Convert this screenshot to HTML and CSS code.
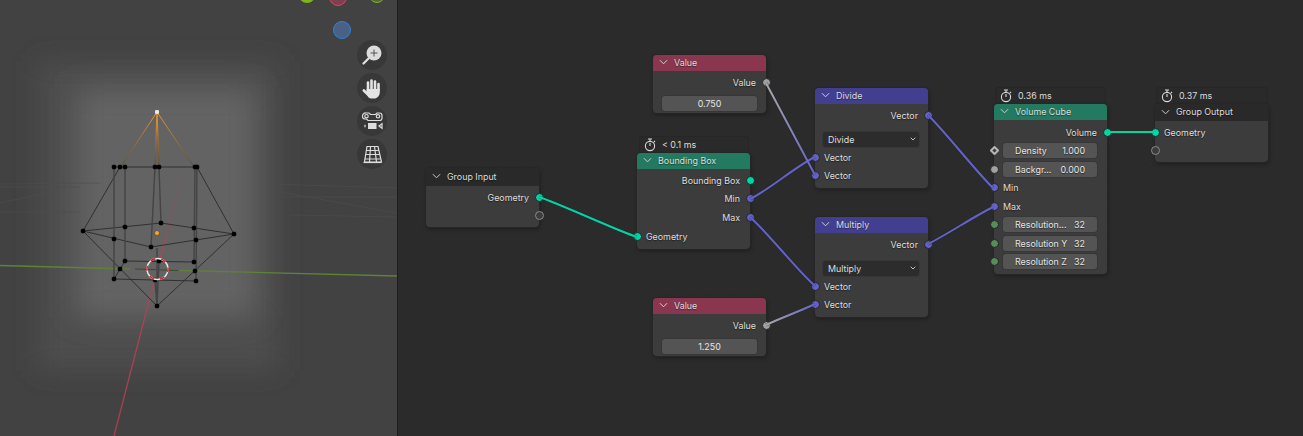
FILE: index.html
```html
<!DOCTYPE html>
<html lang="en">
<head>
<meta charset="utf-8">
<title>Geometry Nodes</title>
<link rel="stylesheet" href="styles.css">
</head>
<body>
<svg class="defs" width="0" height="0" aria-hidden="true">
  <defs>
    <symbol id="chev" viewBox="0 0 10 6"><path d="M1 1l4 4 4-4" fill="none" stroke="currentColor" stroke-width="1.100"/></symbol>
    <symbol id="watch" viewBox="0 0 12 14"><g fill="none" stroke="#d8d8d8" stroke-width="1.100"><circle cx="6" cy="8" r="4.600"/><path d="M6 8V5M4 1h4M6 1v2M10 3l1 1"/></g></symbol>
    <symbol id="small-chev" viewBox="0 0 6 4"><path d="M.7.7L3 3 5.300.7" fill="none" stroke="#d0d0d0" stroke-width=".9"/></symbol>
  </defs>
</svg>
<main class="app">
  <section class="viewport">
    <svg class="scene" viewBox="0 0 397 436" width="397" height="436">
      <defs>
        <filter id="blur-a" x="-40%" y="-40%" width="180%" height="180%"><feGaussianBlur stdDeviation="12"/></filter>
        <filter id="blur-b" x="-40%" y="-40%" width="180%" height="180%"><feGaussianBlur stdDeviation="14"/></filter>
        <linearGradient id="fade-orange-l" gradientUnits="userSpaceOnUse" x1="157" y1="112" x2="157" y2="167"><stop offset="0" stop-color="#f39a2e"/><stop offset="1" stop-color="#5a4a38"/></linearGradient>
        <linearGradient id="fade-red" gradientUnits="userSpaceOnUse" x1="114" y1="436" x2="183" y2="170"><stop offset="0" stop-color="#a93d50"/><stop offset=".7" stop-color="#a5485a"/><stop offset="1" stop-color="#6a5a5d" stop-opacity=".2"/></linearGradient>
      </defs>
      <rect x="38" y="62" width="240" height="308" fill="#4d4d4d" filter="url(#blur-a)"/>
      <rect x="76" y="88" width="180" height="230" fill="#636363" filter="url(#blur-b)"/>
      <g stroke="#4f4f4f" stroke-width="1" fill="none" opacity=".6">
        <path d="M0 184L100 183M0 187H80M0 203L60 190M0 212H80M270 184L397 188M280 192L397 213M270 197H397M290 215L397 217"/>
      </g>
      <path d="M0 265.500L130 269M180 270.500L397 276" stroke="#5f8236" stroke-width="1.300" fill="none"/>
      <path d="M135 269L178 270.500" stroke="#3d4a2a" stroke-width="1.200" fill="none"/>
      <path d="M114 436L183 170" stroke="url(#fade-red)" stroke-width="1.300" fill="none"/>
      <g stroke="url(#fade-orange-l)" fill="none">
        <path d="M157 112L122 165" stroke-width="1"/>
        <path d="M157 112L155 167M157 112L159 167" stroke-width="1.200"/>
        <path d="M157 112L194 167" stroke-width="1"/>
      </g>
      <g fill="none" stroke="#2a2a2a" stroke-width=".9">
        <path d="M114 167H197"/>
        <path d="M120 167L83 231M197 167L234 234"/>
        <path d="M83 231L161 223L234 234L151 247Z"/>
        <path d="M83 231L157 306L234 234"/>
        <path d="M125 261L194 262M114 279L196 281M125 261L114 279"/>
      </g>
      <g fill="none" stroke="#444" stroke-width="1.400">
        <path d="M114 167V279M125 167V261M195 167L194 262M197 167L196 281"/>
        <path d="M155 167L151 247M159 167L161 223M157 248V306M155 280L157 306M159 261L157 306"/>
      </g>
      <g class="verts" fill="#000">
        <rect x="112" y="165" width="4" height="4"/><rect x="118" y="165" width="4" height="4"/><rect x="123" y="165" width="4" height="4"/><rect x="153" y="165" width="4" height="4"/><rect x="157" y="165" width="4" height="4"/><rect x="193" y="165" width="4" height="4"/><rect x="195" y="165" width="4" height="4"/>
        <rect x="81" y="229" width="4" height="4"/><rect x="123" y="225" width="4" height="4"/><rect x="159" y="221" width="4" height="4"/><rect x="192" y="226" width="4" height="4"/><rect x="232" y="232" width="4" height="4"/><rect x="194" y="238" width="4" height="4"/><rect x="149" y="245" width="4" height="4"/><rect x="112" y="237" width="4" height="4"/>
        <rect x="123" y="259" width="4" height="4"/><rect x="157" y="259" width="4" height="4"/><rect x="192" y="260" width="4" height="4"/><rect x="118" y="267" width="4" height="4"/><rect x="193" y="269" width="4" height="4"/><rect x="112" y="277" width="4" height="4"/><rect x="153" y="278" width="4" height="4"/><rect x="194" y="279" width="4" height="4"/><rect x="155" y="304" width="4" height="4"/>
      </g>
      <rect class="apex" x="155" y="110" width="4" height="4" fill="#e8e8e8"/>
      <circle cx="157" cy="233" r="2.500" fill="#f2a531" stroke="#3a3a3a" stroke-width=".6"/>
      <circle cx="157.500" cy="269" r="10.500" fill="none" stroke="#e8e8e8" stroke-width="1.400"/>
      <circle cx="157.500" cy="269" r="10.500" fill="none" stroke="#e0181c" stroke-width="1.400" stroke-dasharray="5 6" stroke-dashoffset="2"/>
    </svg>
    <div class="gizmo">
      <span class="axis axis-y"></span>
      <span class="axis axis-x"></span>
      <span class="axis axis-y2"></span>
      <span class="axis axis-z"></span>
    </div>
    <div class="tools">
      <div class="tool">
        <svg viewBox="0 0 30 30" width="30" height="30"><circle cx="17" cy="13" r="7.500" fill="#dcdcdc"/><path d="M11.500 18.500L6.500 23.500" stroke="#dcdcdc" stroke-width="2.400" stroke-linecap="round"/><path d="M17 9.500v7M13.500 13h7" stroke="#555" stroke-width="1"/></svg>
      </div>
      <div class="tool">
        <svg viewBox="0 0 30 30" width="30" height="30"><g stroke="#e4e4e4" stroke-width="2.600" stroke-linecap="round" fill="none"><path d="M11 17V9.500M14.500 16V7.500M18 16V8.500M21.500 17V11M6.800 17.500L11 21.500"/></g><path d="M9.500 16H22.800V19C22.800 23 20 25.500 17 25.500H14C11.500 25.500 10 22.500 9.500 20z" fill="#e4e4e4"/></svg>
      </div>
      <div class="tool">
        <svg viewBox="0 0 30 30" width="30" height="30"><g fill="none" stroke="#dcdcdc" stroke-width="1.200"><path d="M9 7h3l1.500 1.500h5L20 7h2.500a2.500 2.500 0 0 1 2.500 2.500V12a2.500 2.500 0 0 1-2.500 2.500H11l-1.500-1.500H8A2.500 2.500 0 0 1 5.500 10.500V10A3 3 0 0 1 9 7z"/><circle cx="9.500" cy="10.200" r="1.700"/><circle cx="21" cy="10.300" r="1.700"/><rect x="11" y="17" width="8.500" height="6" fill="#dcdcdc" stroke="none"/><path d="M8 18.800v2.400M25 17.800l-3 2.200 3 2.200z"/></g></svg>
      </div>
      <div class="tool">
        <svg viewBox="0 0 30 30" width="30" height="30"><g fill="none" stroke="#dcdcdc" stroke-width="1.200"><path d="M10 7.500h11l3.500 15.500h-17z"/><path d="M9.200 11.500h12.700M8.400 15.500h14.300M7.500 20h16M13.500 7.500L12.500 23M17.500 7.500L19.500 23"/><path d="M6.500 23.500h18"/></g></svg>
      </div>
    </div>
  </section>
  <section class="editor">
    <svg class="wires" viewBox="0 0 905 436" width="905" height="436">
      <defs>
        <linearGradient id="w-grey-a" gradientUnits="userSpaceOnUse" x1="368" y1="83" x2="417" y2="175"><stop offset="0" stop-color="#a8a8a8"/><stop offset="1" stop-color="#6363c7"/></linearGradient>
        <linearGradient id="w-grey-b" gradientUnits="userSpaceOnUse" x1="368" y1="325" x2="417" y2="304"><stop offset="0" stop-color="#a8a8a8"/><stop offset="1" stop-color="#6363c7"/></linearGradient>
      </defs>
      <g fill="none" stroke="#1f1f1f" stroke-width="3.400" opacity=".45">
        <path d="M141 197C160 203 220 231 239 237"/>
        <path d="M352 199C371 190 398 166 417 157"/>
        <path d="M352 217C371 234 398 269 417 286"/>
        <path d="M368 83C380 105 405 153 417 175"/>
        <path d="M368 325C385 317 400 312 417 304"/>
        <path d="M530 115C550 135 575 168 595 188"/>
        <path d="M530 244C550 234 575 217 595 207"/>
      </g>
      <g fill="none" stroke-width="2">
        <path d="M141 197C160 203 220 231 239 237" stroke="#00d6a3"/>
        <path d="M709 132H757" stroke="#00d6a3"/>
        <path d="M352 199C371 190 398 166 417 157" stroke="#6363c7"/>
        <path d="M352 217C371 234 398 269 417 286" stroke="#6363c7"/>
        <path d="M368 83C380 105 405 153 417 175" stroke="url(#w-grey-a)"/>
        <path d="M368 325C385 317 400 312 417 304" stroke="url(#w-grey-b)"/>
        <path d="M530 115C550 135 575 168 595 188" stroke="#6363c7"/>
        <path d="M530 244C550 234 575 217 595 207" stroke="#6363c7"/>
      </g>
    </svg>

    <article class="node n-group-in">
      <header class="head head-group"><svg class="chev"><use href="#chev"/></svg>Group Input</header>
      <div class="rows">
        <div class="row out">Geometry<i class="sock sock-r geo"></i></div>
        <div class="row out"><i class="sock sock-r empty"></i></div>
      </div>
    </article>

    <div class="timing t-bbox"><svg class="watch"><use href="#watch"/></svg>&lt; 0.1 ms</div>
    <article class="node n-bbox">
      <header class="head head-geo"><svg class="chev"><use href="#chev"/></svg>Bounding Box</header>
      <div class="rows">
        <div class="row out">Bounding Box<i class="sock sock-r geo"></i></div>
        <div class="row out">Min<i class="sock sock-r vec"></i></div>
        <div class="row out">Max<i class="sock sock-r vec"></i></div>
        <div class="row in gap-in"><i class="sock sock-l geo"></i>Geometry</div>
      </div>
    </article>

    <article class="node n-value-a">
      <header class="head head-val"><svg class="chev"><use href="#chev"/></svg>Value</header>
      <div class="rows">
        <div class="row out">Value<i class="sock sock-r val"></i></div>
        <div class="num">0.750</div>
      </div>
    </article>

    <article class="node n-value-b">
      <header class="head head-val"><svg class="chev"><use href="#chev"/></svg>Value</header>
      <div class="rows">
        <div class="row out">Value<i class="sock sock-r val"></i></div>
        <div class="num">1.250</div>
      </div>
    </article>

    <article class="node n-divide">
      <header class="head head-vec"><svg class="chev"><use href="#chev"/></svg>Divide</header>
      <div class="rows">
        <div class="row out">Vector<i class="sock sock-r vec"></i></div>
        <div class="select">Divide<svg class="select-chev"><use href="#small-chev"/></svg></div>
        <div class="row in"><i class="sock sock-l vec"></i>Vector</div>
        <div class="row in"><i class="sock sock-l vec"></i>Vector</div>
      </div>
    </article>

    <article class="node n-multiply">
      <header class="head head-vec"><svg class="chev"><use href="#chev"/></svg>Multiply</header>
      <div class="rows">
        <div class="row out">Vector<i class="sock sock-r vec"></i></div>
        <div class="select">Multiply<svg class="select-chev"><use href="#small-chev"/></svg></div>
        <div class="row in"><i class="sock sock-l vec"></i>Vector</div>
        <div class="row in"><i class="sock sock-l vec"></i>Vector</div>
      </div>
    </article>

    <div class="timing t-cube"><svg class="watch"><use href="#watch"/></svg>0.36 ms</div>
    <article class="node n-cube">
      <header class="head head-geo"><svg class="chev"><use href="#chev"/></svg>Volume Cube</header>
      <div class="rows">
        <div class="row out">Volume<i class="sock sock-r geo"></i></div>
        <div class="row in"><i class="sock sock-l diamond"></i><div class="field"><span>Density</span><span>1.000</span></div></div>
        <div class="row in"><i class="sock sock-l val"></i><div class="field"><span>Backgr...</span><span>0.000</span></div></div>
        <div class="row in"><i class="sock sock-l vec"></i>Min</div>
        <div class="row in"><i class="sock sock-l vec"></i>Max</div>
        <div class="row in"><i class="sock sock-l int"></i><div class="field"><span>Resolution...</span><span>32</span></div></div>
        <div class="row in"><i class="sock sock-l int"></i><div class="field"><span>Resolution Y</span><span>32</span></div></div>
        <div class="row in"><i class="sock sock-l int"></i><div class="field"><span>Resolution Z</span><span>32</span></div></div>
      </div>
    </article>

    <div class="timing t-out"><svg class="watch"><use href="#watch"/></svg>0.37 ms</div>
    <article class="node n-group-out">
      <header class="head head-group"><svg class="chev"><use href="#chev"/></svg>Group Output</header>
      <div class="rows">
        <div class="row in"><i class="sock sock-l geo"></i>Geometry</div>
        <div class="row in"><i class="sock sock-l empty"></i></div>
      </div>
    </article>
  </section>
</main>
</body>
</html>
```
FILE: styles.css
```css
* { box-sizing: border-box; }
html, body { margin: 0; height: 100%; }
body { background: #1d1d1d; font-family: "Inter", sans-serif; font-size: 8.900px; color: #dedede; overflow: hidden; }
.defs { position: absolute; }
.app { display: flex; width: 1303px; height: 436px; }

.viewport { position: relative; width: 397px; height: 436px; background: #424242; overflow: hidden; flex: none; }
.scene { display: block; }
.verts rect { rx: 1.300px; stroke: #000; stroke-width: .5px; }
.apex { rx: 1.300px; }
.gizmo { position: absolute; inset: 0; }
.axis { position: absolute; border-radius: 50%; }
.axis-y { left: 299px; top: -13px; width: 16px; height: 16px; background: #7fb31f; }
.axis-x { left: 329px; top: -12px; width: 18px; height: 18px; background: #7c4150; border: 1.500px solid #ef3d5c; }
.axis-y2 { left: 369px; top: -13px; width: 16px; height: 16px; background: #55683a; border: 1.500px solid #7fb31f; }
.axis-z { left: 333px; top: 21px; width: 18px; height: 18px; background: #4a6186; border: 1.500px solid #2f80dd; }
.tools { position: absolute; left: 357px; top: 40px; display: flex; flex-direction: column; gap: 3px; }
.tool { width: 30px; height: 30px; border-radius: 50%; background: #383838; }
.tool svg { display: block; }

.editor { position: relative; flex: 1; margin-left: 1px; height: 436px; background-color: #2b2b2b; background-image: radial-gradient(circle, #323232 .7px, transparent 1px); background-size: 21px 21px; background-position: 8px 6px; }
.wires { position: absolute; left: 0; top: 0; z-index: 2; pointer-events: none; }

.node { position: absolute; width: 113px; background: #3c3c3c; border-radius: 4px; box-shadow: 0 0 0 1px #262626, 1px 2px 4px rgba(0,0,0,.35); z-index: 1; }
.head { display: flex; align-items: center; height: 16px; padding: 0 0 1.500px 6px; border-radius: 4px 4px 0 0; color: #dcdcdc; text-shadow: 0 1px 1px rgba(0,0,0,.45); }
.head-group { height: 18px; background: #292929; }
.n-group-out .head { height: 17px; }
.head-geo { background: #237a60; }
.head-val { background: #8a3650; }
.head-vec { background: #433f90; }
.chev { width: 9px; height: 6px; margin-right: 6px; color: #d0d0d0; flex: none; }

.rows { padding: 1.750px 0 2.500px; }
.n-cube .rows { padding-top: 3px; }
.n-value-a .rows, .n-value-b .rows { padding-top: 2.250px; }
.row { position: relative; display: flex; align-items: center; height: 18.500px; text-shadow: 0 1px 1px rgba(0,0,0,.5); }
.row.out { justify-content: flex-end; padding-right: 10px; }
.row.in { padding-left: 9px; padding-right: 10px; }
.gap-in { margin-top: 1.250px; }

.sock { position: absolute; top: 50%; width: 9px; height: 9px; margin-top: -4.500px; border-radius: 50%; border: 1px solid #222; z-index: 3; }
.sock-r { right: -4.500px; }
.sock-l { left: -4.500px; }
.geo { background: #00d6a3; }
.vec { background: #6363c7; }
.val { background: #a1a1a1; }
.int { background: #598c5c; }
.empty { background: #3c3c3c; border-color: #8a8a8a; }
.diamond { width: 7px; height: 7px; margin-top: -3.500px; left: -3.500px; border-radius: 1px; transform: rotate(45deg); background: #3c3c3c; border: 2px solid #b5b5b5; }

.num { display: flex; align-items: center; justify-content: center; height: 15px; margin: 3.750px 9px 0; background: #545454; border-radius: 3px; box-shadow: 0 0 0 1px #373737; color: #e6e6e6; }
.field { flex: 1; display: flex; justify-content: space-between; align-items: center; height: 15px; padding: 0 12px; background: #545454; border-radius: 3px; box-shadow: 0 0 0 1px #373737; color: #e6e6e6; white-space: nowrap; }
.select { position: relative; display: flex; align-items: center; height: 14.500px; margin: 7.750px 9px 1.500px 8px; padding-left: 5px; background: #2c2c2c; border-radius: 3px; box-shadow: 0 0 0 1px #373737; }
.select-chev { position: absolute; right: 3px; top: 5px; width: 6px; height: 4px; }

.timing { position: absolute; display: flex; align-items: center; height: 16px; padding: 0 0 1px 4px; background: #2a2a2a; border-radius: 3px 3px 0 0; color: #dcdcdc; box-shadow: 0 0 0 1px #262626; }
.watch { width: 12px; height: 14px; margin-right: 6px; flex: none; }

.n-group-in { left: 28px; top: 168px; }
.n-bbox { left: 239px; top: 153px; }
.n-value-a { left: 255px; top: 55px; }
.n-value-b { left: 255px; top: 298px; }
.n-divide { left: 417px; top: 88px; }
.n-multiply { left: 417px; top: 217px; }
.n-cube { left: 596px; top: 104px; }
.n-group-out { left: 757px; top: 104px; }
.t-bbox { left: 242px; top: 137px; width: 108px; }
.t-cube { left: 598px; top: 88px; width: 109px; }
.t-out { left: 759px; top: 88px; width: 110px; }
```
